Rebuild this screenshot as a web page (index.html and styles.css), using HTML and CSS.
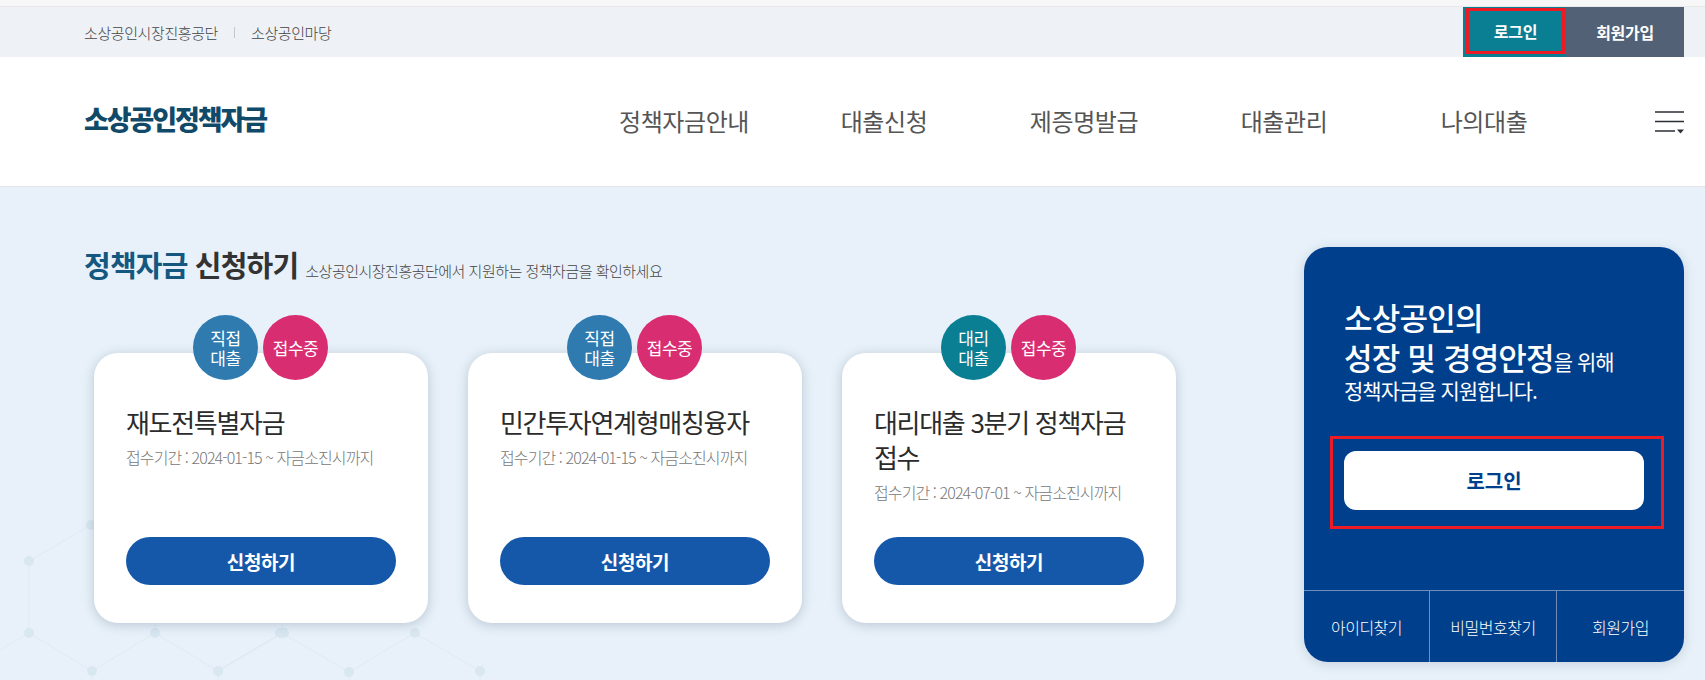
FILE: index.html
```html
<!DOCTYPE html>
<html lang="ko">

<head>
    <meta charset="UTF-8">
    <title>소상공인정책자금</title>
    <link rel="stylesheet" href="styles.css">
</head>

<body>

    <div class="topbar">
        <div class="topbar-links">
            <a href="#">소상공인시장진흥공단</a>
            <span class="sep"></span>
            <a href="#">소상공인마당</a>
        </div>
        <div class="topbar-btns">
            <a href="#" class="btn-login"><span>로그인</span></a>
            <a href="#" class="btn-join">회원가입</a>
        </div>
    </div>

    <header class="header">
        <a href="#" class="logo">소상공인정책자금</a>
        <nav class="gnb">
            <a href="#">정책자금안내</a>
            <a href="#">대출신청</a>
            <a href="#">제증명발급</a>
            <a href="#">대출관리</a>
            <a href="#">나의대출</a>
        </nav>
        <a href="#" class="menu-btn" aria-label="전체메뉴">
            <svg width="29" height="21" viewBox="0 0 29 21">
                <path d="M0 1h29M0 10.500h29M0 20h20" stroke="#2b2f36" stroke-width="1.500" fill="none" />
                <path d="M22 18.500h7l-3.500 4z" fill="#2b2f36" />
            </svg>
        </a>
    </header>

    <main class="main">
        <!-- background pattern -->
        <svg class="hex-bg" width="500" height="190" viewBox="0 0 500 190">
            <g stroke="#dfeaf4" stroke-width="1" fill="none">
                <path d="M91 35L29 71V143L92 181L155 143L218 181L282 143L349 182L415 143L480 181" />
                <path d="M29 143L-10 166M92 181V190M218 181V190M349 182V190M480 181V190M155 143V120M282 143V120" />
                <path d="M218 181L282 143" stroke-width="2" />
            </g>
            <g fill="#d8e7f0">
                <circle cx="91" cy="35" r="5" />
                <circle cx="29" cy="71" r="5" />
                <circle cx="29" cy="143" r="5" />
                <circle cx="92" cy="181" r="5" />
                <circle cx="155" cy="143" r="5" />
                <circle cx="218" cy="181" r="5" />
                <circle cx="280" cy="143" r="5" />
                <circle cx="284" cy="143" r="5" />
                <circle cx="349" cy="182" r="5" />
                <circle cx="415" cy="143" r="5" />
                <circle cx="480" cy="181" r="5" />
            </g>
        </svg>

        <section class="apply">
            <h2 class="apply-title"><b><em>정책자금</em> 신청하기</b> <small>소상공인시장진흥공단에서 지원하는 정책자금을 확인하세요</small></h2>

            <div class="card-list">
                <div class="card">
                    <div class="badges">
                        <span class="badge badge-direct">직접<br>대출</span>
                        <span class="badge badge-open">접수중</span>
                    </div>
                    <h3>재도전특별자금</h3>
                    <p>접수기간 : 2024-01-15 ~ 자금소진시까지</p>
                    <a href="#" class="btn-apply">신청하기</a>
                </div>

                <div class="card">
                    <div class="badges">
                        <span class="badge badge-direct">직접<br>대출</span>
                        <span class="badge badge-open">접수중</span>
                    </div>
                    <h3>민간투자연계형매칭융자</h3>
                    <p>접수기간 : 2024-01-15 ~ 자금소진시까지</p>
                    <a href="#" class="btn-apply">신청하기</a>
                </div>

                <div class="card">
                    <div class="badges">
                        <span class="badge badge-agent">대리<br>대출</span>
                        <span class="badge badge-open">접수중</span>
                    </div>
                    <h3>대리대출 3분기 정책자금 접수</h3>
                    <p>접수기간 : 2024-07-01 ~ 자금소진시까지</p>
                    <a href="#" class="btn-apply">신청하기</a>
                </div>
            </div>
        </section>

        <aside class="login-panel">
            <div class="login-top">
                <p class="login-copy"><strong>소상공인의<br>성장 및 경영안정</strong>을 위해<br>정책자금을 지원합니다.</p>
                <div class="login-mark">
                    <a href="#" class="btn-panel-login">로그인</a>
                </div>
            </div>
            <div class="login-links">
                <a href="#">아이디찾기</a>
                <a href="#">비밀번호찾기</a>
                <a href="#">회원가입</a>
            </div>
        </aside>
    </main>

</body>

</html>
```

FILE: styles.css
```css
/* Base */
* {
    box-sizing: border-box;
}

html,
body {
    overflow: hidden;
}

body {
    margin: 0;
    height: 680px;
    font-family: "Noto Sans CJK KR", "Noto Sans", sans-serif;
    color: #222;
    background: #f7f7f7;
    padding-top: 6px;
}

a {
    color: inherit;
    text-decoration: none;
}

/* Top bar */
.topbar {
    display: flex;
    justify-content: space-between;
    height: 51px;
    padding: 0 21px 0 84px;
    background: #eef1f5;
    border-top: 1px solid #e8e8e8;
}

.topbar-links {
    display: flex;
    align-items: center;
    gap: 16px;
    font-size: 15px;
    font-weight: 300;
    letter-spacing: -0.4px;
    color: #444;
}

.sep {
    width: 1px;
    height: 11px;
    background: #c4c8cc;
}

.topbar-btns {
    display: flex;
}

.btn-login,
.btn-join {
    display: flex;
    justify-content: center;
    align-items: center;
    color: #fff;
    font-size: 16px;
    font-weight: 700;
    letter-spacing: -0.3px;
}

.btn-login {
    width: 103px;
    padding: 1px 1px 3px 3px;
    background: #0a7e93;
}

.btn-login span {
    display: flex;
    justify-content: center;
    align-items: center;
    width: 100%;
    height: 100%;
    border: 3px solid #ed1c24;
}

.btn-join {
    width: 118px;
    background: #526176;
}

/* Header */
.header {
    display: flex;
    align-items: center;
    height: 130px;
    padding: 0 21px 0 84px;
    background: #fff;
    border-bottom: 1px solid #e2e4e6;
}

.logo {
    width: 500px;
    padding-bottom: 6px;
    font-size: 27px;
    font-weight: 900;
    letter-spacing: -2.1px;
    color: #114a68;
}

.gnb {
    display: flex;
}

.gnb a {
    width: 200px;
    padding-bottom: 2px;
    text-align: center;
    font-size: 24px;
    font-weight: 400;
    letter-spacing: -0.4px;
    color: #555;
}

.menu-btn {
    display: flex;
    margin-left: auto;
}

.menu-btn svg {
    overflow: visible;
}

/* Main */
.main {
    position: relative;
    display: flex;
    justify-content: space-between;
    height: 493px;
    padding: 60px 21px 0 84px;
    background: #e8f1f9;
}

.hex-bg {
    position: absolute;
    left: 0;
    bottom: 0;
}

.apply {
    position: relative;
    width: 1092px;
}

.apply-title {
    height: 36px;
    margin: 0;
    font-size: 14px;
    font-weight: 400;
    line-height: 34px;
}

.apply-title b {
    font-size: 29px;
    font-weight: 700;
    letter-spacing: -0.8px;
    color: #333;
}

.apply-title em {
    font-style: normal;
    color: #14577f;
}

.apply-title small {
    margin-left: 3px;
    font-size: 15px;
    font-weight: 300;
    letter-spacing: -0.5px;
    color: #444;
}

.card-list {
    display: flex;
    gap: 40px;
    margin-top: 70px;
    padding-left: 10px;
}

.card {
    position: relative;
    display: flex;
    flex-direction: column;
    width: 334px;
    height: 270px;
    padding: 51px 32px 38px;
    background: #fff;
    border-radius: 24px;
    box-shadow: 0 2px 12px rgba(60, 90, 120, 0.28);
}

.badges {
    position: absolute;
    top: -38px;
    left: 99px;
    display: flex;
    gap: 5px;
}

.badge {
    display: flex;
    justify-content: center;
    align-items: center;
    width: 65px;
    height: 65px;
    border-radius: 50%;
    color: #fff;
    text-align: center;
    font-size: 17px;
    line-height: 20px;
    letter-spacing: -0.5px;
}

.badge-direct {
    background: #2f7bb0;
}

.badge-agent {
    background: #0a7e93;
}

.badge-open {
    background: #d92d72;
}

.card h3 {
    margin: 0;
    font-size: 26px;
    font-weight: 400;
    line-height: 35px;
    letter-spacing: -1.3px;
    color: #2b2b2b;
    word-break: keep-all;
}

.card p {
    margin: 8px 0 0;
    font-size: 16px;
    font-weight: 300;
    line-height: 20px;
    letter-spacing: -0.9px;
    color: #777;
}

.btn-apply {
    display: flex;
    justify-content: center;
    align-items: center;
    height: 48px;
    margin-top: auto;
    border-radius: 24px;
    background: #1558aa;
    color: #fff;
    font-size: 19px;
    font-weight: 700;
    letter-spacing: -0.4px;
}

/* Login panel */
.login-panel {
    position: relative;
    display: flex;
    flex-direction: column;
    width: 380px;
    height: 415px;
    color: #fff;
    background: #003f8c;
    border-radius: 24px;
    box-shadow: 0 2px 12px rgba(60, 90, 120, 0.2);
    overflow: hidden;
}

.login-top {
    flex: 1;
    padding: 50px 20px 0 26px;
}

.login-copy {
    margin: 0 0 0 14px;
    font-size: 21px;
    line-height: 27px;
    letter-spacing: -1px;
}

.login-copy strong {
    font-size: 31px;
    line-height: 40px;
    font-weight: 500;
    letter-spacing: -0.8px;
}

.login-mark {
    margin-top: 32px;
    padding: 12px 17px 16px 11px;
    border: 3px solid #ed1c24;
}

.btn-panel-login {
    display: flex;
    justify-content: center;
    align-items: center;
    width: 300px;
    height: 59px;
    border-radius: 12px;
    background: #fff;
    color: #003f8c;
    font-size: 20px;
    font-weight: 700;
}

.login-links {
    display: flex;
    height: 72px;
    border-top: 1px solid #6f8fba;
}

.login-links a {
    display: flex;
    justify-content: center;
    align-items: center;
    font-size: 16px;
    font-weight: 300;
    letter-spacing: -0.5px;
}

.login-links a:nth-child(1) {
    width: 125px;
}

.login-links a:nth-child(2) {
    width: 128px;
    border-left: 1px solid #6f8fba;
    border-right: 1px solid #6f8fba;
}

.login-links a:nth-child(3) {
    flex: 1;
}
```
